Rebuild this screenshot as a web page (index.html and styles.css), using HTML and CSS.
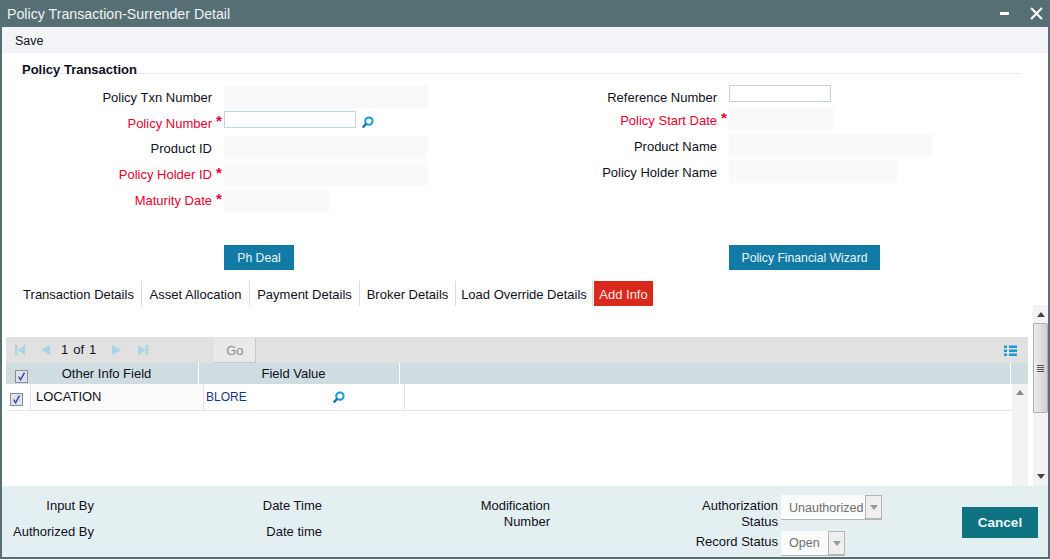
FILE: index.html
```html
<!DOCTYPE html>
<html lang="en">
<head>
<meta charset="utf-8">
<title>Policy Transaction-Surrender Detail</title>
<link rel="stylesheet" href="styles.css">
</head>
<body>
<svg class="defs" width="0" height="0" aria-hidden="true">
  <symbol id="search" viewBox="0 0 12 12"><circle cx="7.3" cy="4.7" r="3.4" fill="none" stroke="currentColor" stroke-width="1.9"/><path d="M4.8 7.2 1.6 10.6" stroke="#0d6f9c" stroke-width="2.2" fill="none"/></symbol>
  <symbol id="check" viewBox="0 0 12 12"><path d="M2.8 6.2 5 9.6 9.2 1.8" fill="none" stroke="#3a4fa8" stroke-width="1.7"/></symbol>
  <symbol id="caret" viewBox="0 0 8 5"><path d="M0 5 4 0 8 5Z" fill="currentColor"/></symbol>
</svg>
<div class="window">
  <header class="titlebar">
    <span class="title">Policy Transaction-Surrender Detail</span>
    <span class="minimize"></span>
    <svg class="close" viewBox="0 0 12 12"><path d="M1 1 11 11M11 1 1 11" stroke="#fff" stroke-width="2"/></svg>
  </header>
  <nav class="toolbar"><span>Save</span></nav>
  <section class="section-head"><h2>Policy Transaction</h2></section>

  <section class="form">
    <div class="col col-left">
      <div class="row"><label>Policy Txn Number</label><i class="star"></i><div class="ro w-wide"></div></div>
      <div class="row"><label class="req">Policy Number</label><i class="star">*</i><div class="input w-num"></div><svg class="lens lens-form"><use href="#search"/></svg></div>
      <div class="row nudge"><label>Product ID</label><i class="star"></i><div class="ro w-wide"></div></div>
      <div class="row tight"><label class="req">Policy Holder ID</label><i class="star">*</i><div class="ro w-wide"></div></div>
      <div class="row tight"><label class="req">Maturity Date</label><i class="star">*</i><div class="ro w-date"></div></div>
    </div>
    <div class="col col-right">
      <div class="row first"><label>Reference Number</label><i class="star"></i><div class="input w-ref"></div></div>
      <div class="row"><label class="req">Policy Start Date</label><i class="star">*</i><div class="ro w-date"></div></div>
      <div class="row"><label>Product Name</label><i class="star"></i><div class="ro w-wide"></div></div>
      <div class="row"><label>Policy Holder Name</label><i class="star"></i><div class="ro w-name"></div></div>
    </div>
  </section>

  <section class="actions">
    <div class="action-l"><button class="btn btn-deal">Ph Deal</button></div>
    <div class="action-r"><button class="btn btn-wizard">Policy Financial Wizard</button></div>
  </section>

  <ul class="tabs">
    <li class="t1">Transaction Details</li>
    <li class="t2">Asset Allocation</li>
    <li class="t3">Payment Details</li>
    <li class="t4">Broker Details</li>
    <li class="t5">Load Override Details</li>
    <li class="active">Add Info</li>
  </ul>

  <section class="panel">
    <div class="panel-main">
      <div class="grid">
        <div class="pager">
          <span class="pager-icons">
            <svg class="pg" viewBox="0 0 12 12"><path d="M1 1H3.4V11H1ZM11 1V11L3.4 6Z"/></svg>
            <svg class="pg pg-prev" viewBox="0 0 12 12"><path d="M11 1V11L2 6Z"/></svg>
          </span>
          <span class="count">1</span><span class="count">of</span><span class="count">1</span>
          <span class="pager-icons pager-next">
            <svg class="pg" viewBox="0 0 12 12"><path d="M1 1V11L10 6Z"/></svg>
            <svg class="pg pg-last" viewBox="0 0 12 12"><path d="M1 1V11L8.6 6ZM8.6 1H11V11H8.6Z"/></svg>
          </span>
          <span class="go">Go</span>
          <svg class="list-icon" viewBox="0 0 13 13"><path d="M0 1.5H3V4H0ZM5 1.5H13V4H5ZM0 5.5H3V8H0ZM5 5.5H13V8H5ZM0 9.5H3V12H0ZM5 9.5H13V12H5Z"/></svg>
        </div>
        <div class="grid-head">
          <div class="hc hc-check"><span class="cb"><svg><use href="#check"/></svg></span></div>
          <div class="hc hc-field">Other Info Field</div>
          <div class="hc hc-value">Field Value</div>
          <div class="hc hc-rest"></div>
        </div>
        <div class="grid-bodywrap">
          <div class="grid-body">
            <div class="grid-row">
              <div class="rc rc-check"><span class="cb"><svg><use href="#check"/></svg></span></div>
              <div class="rc rc-field">LOCATION</div>
              <div class="rc rc-value"><span>BLORE</span><svg class="lens"><use href="#search"/></svg></div>
            </div>
          </div>
          <div class="scroll scroll-inner">
            <svg class="arrow"><use href="#caret"/></svg>
          </div>
        </div>
      </div>
    </div>
    <div class="scroll scroll-outer">
      <svg class="arrow"><use href="#caret"/></svg>
      <div class="thumb"><span></span><span></span><span></span><span></span></div>
      <svg class="arrow down"><use href="#caret"/></svg>
    </div>
  </section>

  <footer class="footer">
    <div class="f-col f-a"><div class="f-line">Input By</div><div class="f-line">Authorized By</div></div>
    <div class="f-col f-b"><div class="f-line">Date Time</div><div class="f-line">Date time</div></div>
    <div class="f-col f-c"><div class="f-mod">Modification<br>Number</div></div>
    <div class="f-col f-d">
      <div class="f-status"><div class="f-label">Authorization<br>Status</div><div class="sel sel-auth"><span>Unauthorized</span><b><svg><use href="#caret"/></svg></b></div></div>
      <div class="f-status f-status-2"><div class="f-label">Record Status</div><div class="sel sel-open"><span>Open</span><b><svg><use href="#caret"/></svg></b></div></div>
    </div>
    <button class="cancel">Cancel</button>
  </footer>
</div>
</body>
</html>
```
FILE: styles.css
```css
* { box-sizing: border-box; }
html, body { margin: 0; padding: 0; background: #fff; }
body { width: 1050px; height: 560px; overflow: hidden; font: 13px/16px "Liberation Sans", Arial, sans-serif; color: #10101c; }
.defs { display: block; height: 0; }
.window { width: 1050px; height: 559px; border: solid #566f74; border-width: 0 2px 2px 2px; display: flex; flex-direction: column; background: #fff; }

.titlebar { height: 27px; margin: 0 -2px; padding: 0 7px; flex: none; display: flex; align-items: center; background: #566f74; color: #eef3f4; }
.title { flex: 1; font-size: 14.2px; padding-top: 1px; }
.minimize { width: 9px; height: 3px; background: #fff; margin-right: 21px; }
.close { width: 13px; height: 13px; }

.toolbar { height: 26px; flex: none; padding: 6px 0 0 13px; background: #f3f4f8; font-size: 12.5px; }
.section-head { height: 21px; margin: 0 26px 0 20px; flex: none; border-bottom: 1px solid #e9ecef; padding-top: 9px; }
.section-head h2 { margin: 0; font-size: 13px; line-height: 15px; font-weight: bold; }

.form { height: 171px; padding-top: 11px; flex: none; display: flex; }
.col { display: flex; flex-direction: column; gap: 3px; }
.col-left { width: 505px; }
.row { height: 23px; display: flex; align-items: center; }
.nudge { margin-top: -1px; margin-bottom: 1px; }
.first { margin-bottom: -3px; }
.row label { text-align: right; padding-top: 2px; }
.row.tight label { padding-top: 0; }
.col-left label { width: 210px; }
.col-right label { width: 210px; }
.row .req { color: #e8002e; }
.star { width: 12px; height: 23px; flex: none; padding-left: 4px; color: #e8002e; font-style: normal; font-weight: bold; font-size: 15px; line-height: 19px; }
.ro { height: 23px; background: #f9f9f9; }
.input { height: 17px; align-self: flex-start; border: 1px solid #c3d3e6; background: #fff; }
.w-wide { width: 203px; }
.w-num { width: 132px; }
.w-date { width: 105px; }
.w-ref { width: 102px; }
.w-name { width: 168px; }
.lens { width: 13px; height: 13px; color: #1a9ad6; }
.lens-form { margin-left: 5px; }

.actions { height: 36px; flex: none; display: flex; }
.btn { height: 25px; padding: 0; border: 0; background: #117ba6; color: #eef5f8; font: 12.2px "Liberation Sans", Arial, sans-serif; }
.action-l { width: 505px; padding-left: 222px; }
.action-r { padding-left: 222px; }
.btn-deal { width: 70px; }
.btn-wizard { width: 151px; }

.tabs { list-style: none; height: 25px; margin: 0; padding: 0 0 0 14px; flex: none; display: flex; }
.tabs li { padding-top: 6px; border-right: 1px solid #dcdcdc; white-space: nowrap; text-align: center; }
.t1 { width: 126px; }
.t2 { width: 108px; }
.t3 { width: 110px; }
.t4 { width: 96px; }
.t5 { width: 137px; }
.tabs .active { margin-left: 1px; width: 59px; background: #d9291c; color: #f6e9e6; border: 0; }

.panel { flex: 1; min-height: 0; display: flex; }
.panel-main { flex: 1; min-width: 0; padding: 31px 5px 0 4px; }
.grid { height: 100%; display: flex; flex-direction: column; }

.pager { height: 26px; flex: none; display: flex; align-items: center; background: #e1e1e1; padding-left: 8px; }
.pager-icons { display: flex; }
.pg { width: 12px; height: 12px; fill: #a8d4e6; }
.pg-prev { margin-left: 13px; }
.count { margin-left: 5px; }
.pager-icons + .count { margin-left: 10px; }
.pager-next { margin-left: 15px; }
.pg-last { margin-left: 14px; }
.go { width: 42px; height: 25px; margin-left: 65px; align-self: flex-start; margin-top: 1px; background: #e9e9e9; border-right: 1px solid #c8c8c8; border-bottom: 1px solid #c8c8c8; color: #8c8c8c; text-align: center; line-height: 25px; }
.list-icon { width: 13px; height: 13px; margin-left: auto; margin-right: 11px; fill: #1a9ad6; }

.grid-head { height: 21px; flex: none; display: flex; background: #cfdde1; }
.hc { text-align: center; line-height: 21px; border-right: 1px solid #fff; }
.hc-check { width: 20px; border: 0; padding: 7px 0 0 9px; line-height: 0; }
.hc-field { width: 173px; padding-right: 11px; }
.hc-value { width: 201px; padding-right: 11px; }
.hc-rest { width: 611px; }
.cb { display: block; width: 13px; height: 13px; border: 1px solid #8f8f8f; background: #dfe1ee; }
.cb svg { display: block; width: 11px; height: 11px; }

.grid-bodywrap { flex: 1; min-height: 0; display: flex; }
.grid-body { flex: 1; min-width: 0; }
.grid-row { height: 27px; display: flex; border-bottom: 1px solid #e3e4f0; }
.rc { line-height: 26px; border-right: 1px solid #e3e4f0; }
.rc-check { width: 25px; padding: 9px 0 0 4px; line-height: 0; }
.rc-field { width: 173px; padding-left: 5px; background: #fbfbfb; }
.rc-value { width: 201px; padding-left: 2px; display: flex; align-items: center; color: #17357f; }
.rc-value span { width: 126px; font-size: 12px; }

.scroll { flex: none; display: flex; flex-direction: column; background: #f3f3f3; color: #666; }
.scroll-inner { width: 16px; padding-top: 6px; color: #888; }
.scroll-outer { width: 15px; margin-top: -1px; padding: 7px 0 7px; color: #444; }
.arrow { width: 8px; height: 5px; margin: 0 auto; display: block; flex: none; }
.down { transform: rotate(180deg); margin-top: auto; }
.thumb { height: 90px; margin: 6px 0 0 0; border: 1px solid #b0b0b0; border-radius: 2px; background: linear-gradient(90deg, #eee, #d0d0d0); display: flex; flex-direction: column; align-items: center; justify-content: center; gap: 1px; }
.thumb span { width: 7px; height: 1px; background: #555; }

.footer { height: 71px; flex: none; display: flex; background: #e4eff2; }
.f-col { flex: none; }
.f-a { width: 92px; padding-top: 12px; text-align: right; }
.f-b { width: 228px; padding-top: 12px; text-align: right; }
.f-c { width: 228px; padding-top: 12px; text-align: right; }
.f-line { height: 26px; }
.f-d { width: 412px; padding-top: 9px; }
.f-status { display: flex; height: 35px; }
.f-label { width: 228px; padding-top: 3px; text-align: right; }
.f-status-2 .f-label { padding-top: 4px; }
.sel { height: 25px; margin-left: 3px; display: flex; background: #fafbfb; border-bottom: 1px solid #b5b5b5; color: #6f6f6f; font-size: 12.5px; }
.sel span { padding: 5px 0 0 8px; }
.sel-open span { padding-top: 4px; }
.sel b { width: 17px; height: 24px; border: 1px solid #b5b5b5; background: #efefef; color: #999; display: flex; align-items: center; justify-content: center; }
.sel b svg { width: 8px; height: 5px; transform: rotate(180deg); }
.sel-auth { width: 101px; }
.sel-auth span { width: 84px; white-space: nowrap; }
.sel-open { width: 64px; margin-top: 1px; }
.sel-open span { width: 47px; }
.cancel { width: 76px; height: 31px; margin: 21px 0 0 0; padding: 0; border: 0; background: #0e7280; color: #eef6f7; font: bold 13.5px "Liberation Sans", Arial, sans-serif; }
```
